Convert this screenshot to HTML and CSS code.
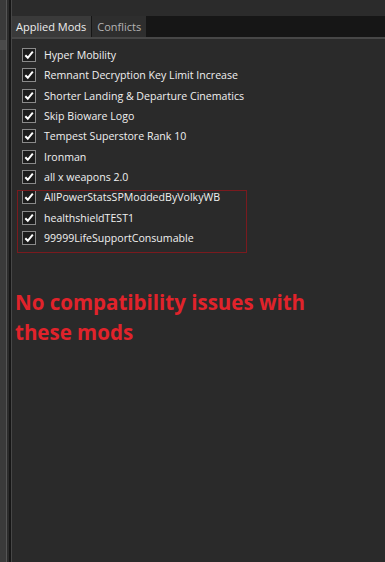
FILE: index.html
```html
<!DOCTYPE html>
<html>
<head>
<meta charset="utf-8">
<link rel="stylesheet" href="styles.css">
</head>
<body>
<div class="app">
  <div class="side">
    <div class="side-strip"><div class="side-btn"></div></div>
    <div class="side-line1"></div>
    <div class="side-gap"></div>
    <div class="side-line2"></div>
  </div>
  <div class="main">
    <div class="topbar"></div>
    <div class="tabs">
      <div class="tab active">Applied Mods</div>
      <div class="tab">Conflicts</div>
    </div>
    <div class="tab-rule"></div>
    <div class="panel">
      <div class="list">
        <div class="row"><span class="cb"><svg viewBox="0 0 12 12"><path d="M2.3 6.2 L4.8 8.8 L9.8 2.6"/></svg></span><span>Hyper Mobility</span></div>
        <div class="row"><span class="cb"><svg viewBox="0 0 12 12"><path d="M2.3 6.2 L4.8 8.8 L9.8 2.6"/></svg></span><span>Remnant Decryption Key Limit Increase</span></div>
        <div class="row"><span class="cb"><svg viewBox="0 0 12 12"><path d="M2.3 6.2 L4.8 8.8 L9.8 2.6"/></svg></span><span>Shorter Landing &amp; Departure Cinematics</span></div>
        <div class="row"><span class="cb"><svg viewBox="0 0 12 12"><path d="M2.3 6.2 L4.8 8.8 L9.8 2.6"/></svg></span><span>Skip Bioware Logo</span></div>
        <div class="row"><span class="cb"><svg viewBox="0 0 12 12"><path d="M2.3 6.2 L4.8 8.8 L9.8 2.6"/></svg></span><span>Tempest Superstore Rank 10</span></div>
        <div class="row"><span class="cb"><svg viewBox="0 0 12 12"><path d="M2.3 6.2 L4.8 8.8 L9.8 2.6"/></svg></span><span>Ironman</span></div>
        <div class="row"><span class="cb"><svg viewBox="0 0 12 12"><path d="M2.3 6.2 L4.8 8.8 L9.8 2.6"/></svg></span><span>all x weapons 2.0</span></div>
        <div class="boxed">
          <div class="row"><span class="cb"><svg viewBox="0 0 12 12"><path d="M2.3 6.2 L4.8 8.8 L9.8 2.6"/></svg></span><span>AllPowerStatsSPModdedByVolkyWB</span></div>
          <div class="row"><span class="cb"><svg viewBox="0 0 12 12"><path d="M2.3 6.2 L4.8 8.8 L9.8 2.6"/></svg></span><span>healthshieldTEST1</span></div>
          <div class="row"><span class="cb"><svg viewBox="0 0 12 12"><path d="M2.3 6.2 L4.8 8.8 L9.8 2.6"/></svg></span><span>99999LifeSupportConsumable</span></div>
        </div>
      </div>
      <p class="note">No compatibility issues with these mods</p>
    </div>
  </div>
</div>
</body>
</html>
```

FILE: styles.css
```css
html, body {
  margin: 0;
  padding: 0;
  width: 385px;
  height: 562px;
  overflow: hidden;
  background: #2a2a2a;
  font-family: "Open Sans", "Noto Sans", sans-serif;
}
.app {
  display: flex;
  height: 562px;
}
.side {
  display: flex;
  flex: none;
  width: 11px;
}
.side-strip {
  width: 6px;
  background: #3a3a3a;
  padding-top: 40px;
}
.side-btn {
  height: 10px;
  background: #4a4a4a;
}
.side-line1 {
  width: 1px;
  background: #555555;
}
.side-gap {
  width: 2px;
  background: #2c2c2c;
}
.side-line2 {
  width: 2px;
  background: #161616;
}
.main {
  flex: 1;
  display: flex;
  flex-direction: column;
  border-left: 1px solid #474747;
}
.topbar {
  height: 16px;
  background: #2b2b2b;
}
.tabs {
  display: flex;
  height: 21px;
  background: #161616;
}
.tab {
  font-size: 11px;
  color: #b4b4b4;
  background: #2e2e2e;
  padding: 0 5px;
  line-height: 21px;
  margin-right: 1px;
}
.tab.active {
  background: #3a3a3a;
  color: #eeeeee;
  padding: 0 5px 0 4px;
}
.tab-rule {
  height: 2px;
  background: #474747;
}
.panel {
  flex: 1;
  background: #2a2a2a;
  padding: 6px 0 0 5px;
}
.list {
  display: flex;
  flex-direction: column;
}
.row {
  display: flex;
  align-items: center;
  height: 20.33px;
  font-size: 10.6px;
  color: #f0f0f0;
  gap: 8px;
  padding-left: 5px;
}
.cb {
  width: 12px;
  height: 12px;
  border: 1px solid #8a8a8a;
  background: #1c1c1c;
  display: flex;
  flex: none;
}
.cb svg {
  width: 12px;
  height: 12px;
}
.cb path {
  fill: none;
  stroke: #ffffff;
  stroke-width: 2;
}
.boxed {
  position: relative;
}
.boxed::after {
  content: "";
  position: absolute;
  left: 0;
  top: 3px;
  bottom: -5px;
  width: 228px;
  border: 1px solid #7a1a1e;
  pointer-events: none;
}
.note {
  margin: 39px 0 0 -2px;
  font-size: 20.5px;
  font-weight: 700;
  line-height: 30px;
  color: #e1232b;
  width: 330px;
}
```
